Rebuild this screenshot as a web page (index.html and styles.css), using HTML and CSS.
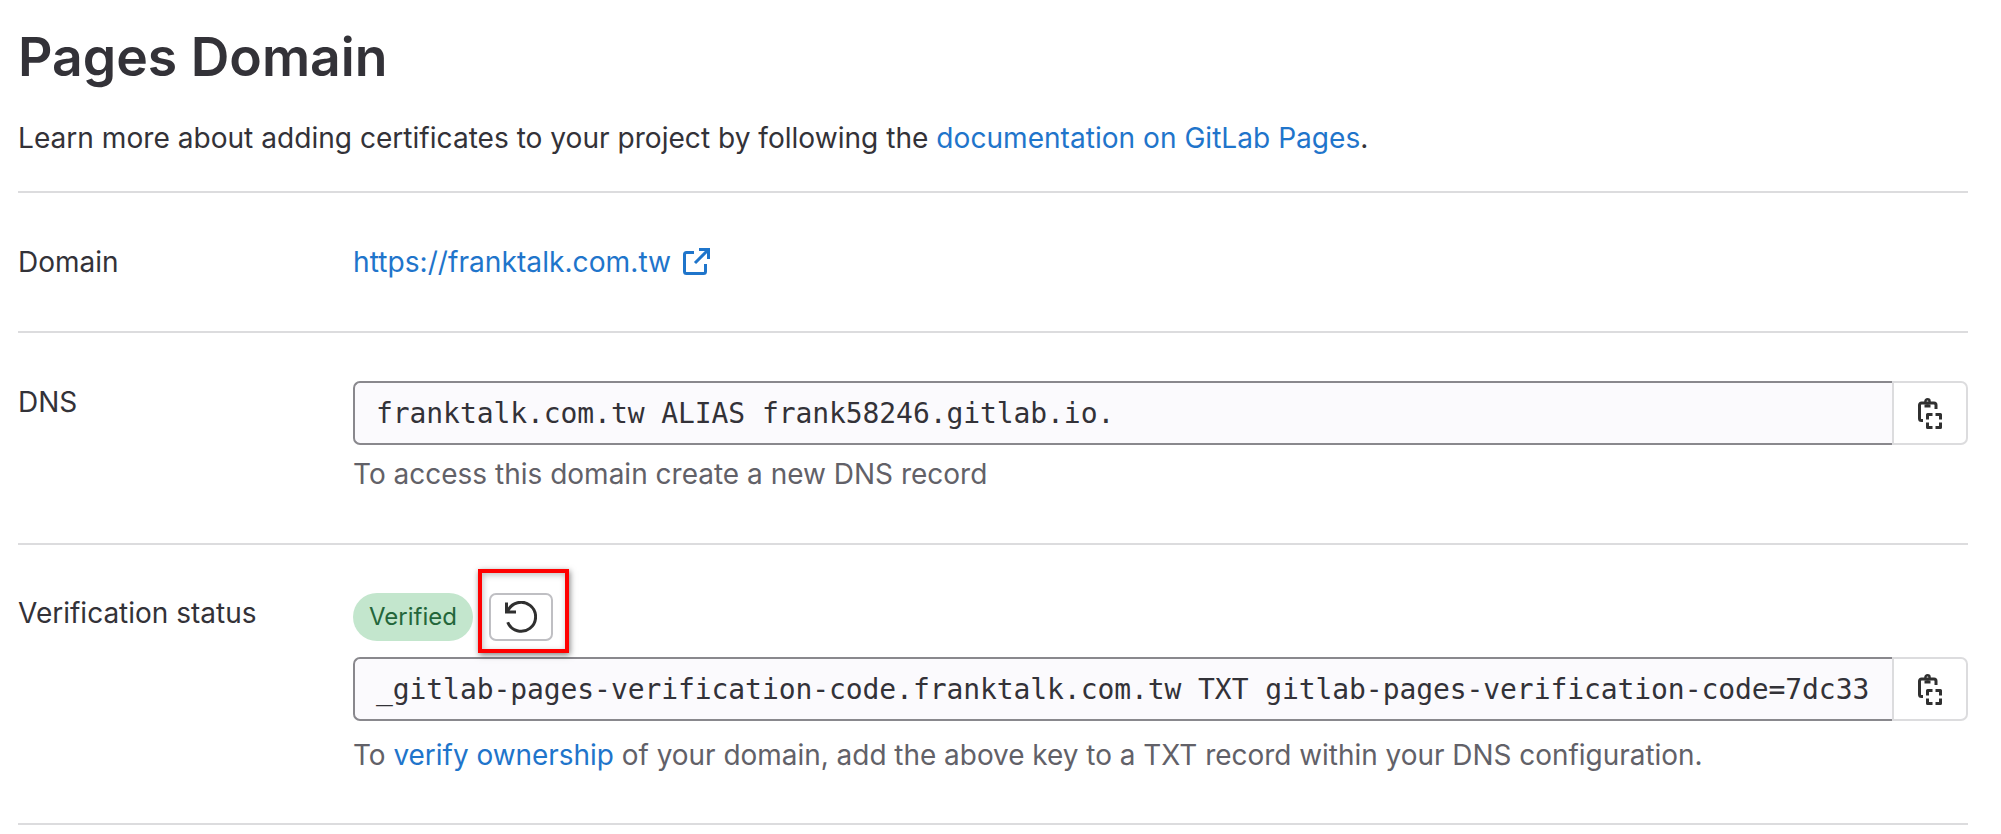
FILE: index.html
```html
<!DOCTYPE html>
<html lang="en">
<head>
  <meta charset="UTF-8" />
  <title>Pages Domain</title>
  <link rel="stylesheet" href="styles.css">
</head>
<body>
  <main class="page">
    <h1>Pages Domain</h1>
    <p class="intro">Learn more about adding certificates to your project by following the <a href="#">documentation on GitLab Pages</a>.</p>

    <section class="row row-domain">
      <div class="label">Domain</div>
      <div class="value">
        <a class="domain-link" href="#">https://franktalk.com.tw
          <svg class="ext-icon" viewBox="0 0 28 28" fill="none" stroke="currentColor" stroke-width="3">
            <path d="M12 4.500H4.500a2 2 0 0 0-2 2v17a2 2 0 0 0 2 2h17a2 2 0 0 0 2-2V16" />
            <path d="M13 15L26 2M17 1.500h9.500V11" />
          </svg>
        </a>
      </div>
    </section>

    <section class="row row-dns">
      <div class="label">DNS</div>
      <div class="value">
        <div class="copy-field">
          <div class="code">franktalk.com.tw ALIAS frank58246.gitlab.io.</div>
          <button class="copy-btn" type="button">
            <svg class="copy-icon" viewBox="0 0 24 31"><use href="#clip" /></svg>
          </button>
        </div>
        <p class="help">To access this domain create a new DNS record</p>
      </div>
    </section>

    <section class="row row-verify">
      <div class="label">Verification status</div>
      <div class="value">
        <div class="status">
          <span class="badge">Verified</span>
          <span class="retry-wrap">
            <button class="retry-btn" type="button">
              <svg class="retry-icon" viewBox="0 0 32 32" fill="none" stroke="#303030" stroke-width="3">
                <path d="M2.800 10A14.500 14.500 0 1 1 2.700 21.300" />
                <path d="M1.500 1.500V11H11" />
              </svg>
            </button>
            <span class="highlight"></span>
          </span>
        </div>
        <div class="copy-field">
          <div class="code">_gitlab-pages-verification-code.franktalk.com.tw TXT gitlab-pages-verification-code=7dc33</div>
          <button class="copy-btn" type="button">
            <svg class="copy-icon" viewBox="0 0 24 31"><use href="#clip" /></svg>
          </button>
        </div>
        <p class="help">To <a href="#">verify ownership</a> of your domain, add the above key to a TXT record within your DNS configuration.</p>
      </div>
    </section>
  </main>

  <svg class="defs" width="0" height="0">
    <symbol id="clip" viewBox="0 0 24 31">
      <g fill="none" stroke="#303030" stroke-width="3" stroke-linejoin="round">
        <path d="M5 22.500H3.500a2 2 0 0 1-2-2V7a2 2 0 0 1 2-2H16a2 2 0 0 1 2 2v4" />
        <path d="M6.500 8h6" />
        <circle cx="9.500" cy="3.400" r="2.100" stroke-width="2.400" />
        <path d="M9.500 21.500v-5h5M17.500 16.500h5v5M9.500 24.500v5h5M17.500 29.500h5v-5" />
      </g>
    </symbol>
  </svg>
</body>
</html>
```

FILE: styles.css
```css
body {
  margin: 0;
  font-family: Inter, "Noto Sans", sans-serif;
  font-size: 28px;
  line-height: 40px;
  color: #333238;
  background: #fff;
}
a {
  color: #1f75cb;
  text-decoration: none;
}
.page {
  width: 1950px;
  margin-left: 18px;
}
h1 {
  margin: 0;
  padding-top: 22px;
  font-size: 53.5px;
  line-height: 70px;
  font-weight: 600;
}
.intro {
  margin: 26px 0 0;
  padding-bottom: 33px;
  font-size: 28.1px;
}
.row {
  display: flex;
  border-top: 2px solid #dcdcde;
  box-sizing: border-box;
}
.row-domain {
  height: 140px;
  padding-top: 49px;
}
.row-dns {
  height: 212px;
  padding-top: 48px;
}
.row-dns .label {
  padding-top: 1px;
}
.row-verify {
  height: 282px;
  padding-top: 48px;
  border-bottom: 2px solid #dcdcde;
}
.label {
  width: 335px;
  flex: none;
}
.value {
  flex: 1;
  min-width: 0;
}
.domain-link {
  display: inline-flex;
  align-items: center;
  gap: 11px;
  font-size: 28.2px;
}
.ext-icon {
  width: 28px;
  height: 28px;
}
.copy-field {
  display: flex;
  height: 64px;
}
.code {
  flex: 1;
  min-width: 0;
  box-sizing: border-box;
  padding: 0 21px;
  border: 2px solid #89888d;
  border-right: 0;
  border-radius: 7px 0 0 7px;
  background: #fbfafd;
  font-family: "DejaVu Sans Mono", "Liberation Mono", monospace;
  font-size: 28px;
  line-height: 62px;
  letter-spacing: -0.08px;
  color: #333238;
  white-space: nowrap;
  overflow: hidden;
}
.copy-btn {
  width: 76px;
  flex: none;
  padding: 0;
  border: 2px solid #dcdcde;
  border-radius: 0 7px 7px 0;
  background: #fff;
  display: flex;
  align-items: center;
  justify-content: center;
}
.copy-icon {
  width: 24px;
  height: 31px;
}
.help {
  margin: 9px 0 0;
  color: #626168;
}
.row-verify .help {
  margin-top: 14px;
  font-size: 27.93px;
}
.status {
  display: flex;
  align-items: center;
  gap: 16px;
  margin-bottom: 16px;
}
.badge {
  height: 48px;
  padding: 0 16px;
  border-radius: 24px;
  background: #c3e6cd;
  color: #24663b;
  font-size: 24px;
  line-height: 48px;
}
.retry-wrap {
  position: relative;
  display: flex;
}
.retry-btn {
  width: 64px;
  height: 48px;
  padding: 0;
  border: 2px solid #bfbfc3;
  border-radius: 7px;
  background: #fff;
  display: flex;
  align-items: center;
  justify-content: center;
}
.retry-icon {
  width: 32px;
  height: 32px;
}
.highlight {
  position: absolute;
  left: -11px;
  top: -24px;
  width: 91px;
  height: 84px;
  box-sizing: border-box;
  border: 4px solid #f00;
  box-shadow: 1px 2px 6px rgba(0, 0, 0, 0.5), inset 1px 2px 6px rgba(0, 0, 0, 0.25);
}
.defs {
  position: absolute;
}
```
